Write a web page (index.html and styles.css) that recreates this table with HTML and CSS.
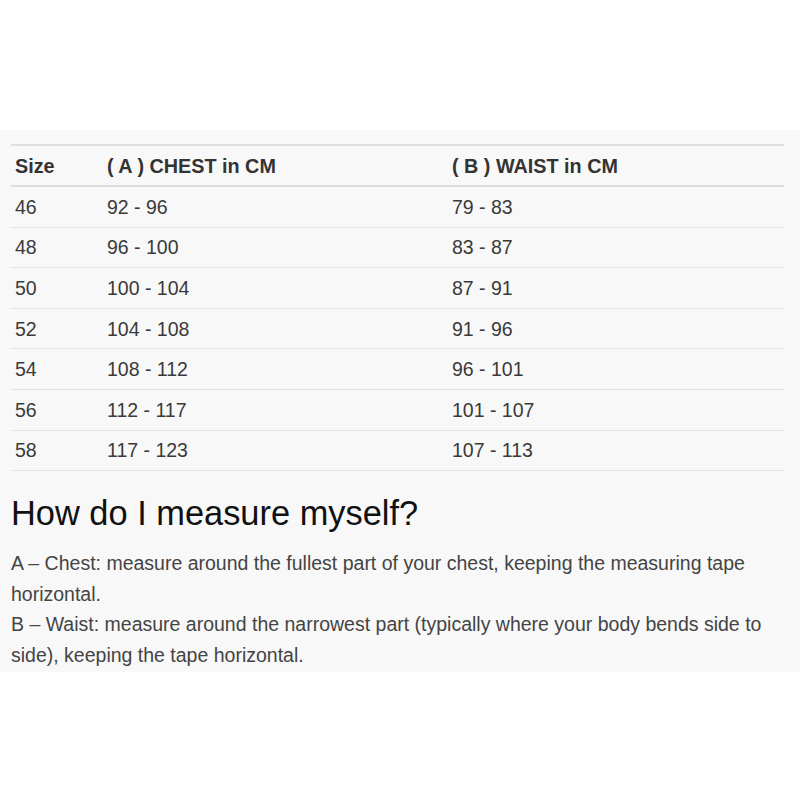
FILE: index.html
```html
<!DOCTYPE html>
<html>
<head>
<meta charset="utf-8">
<link rel="stylesheet" href="styles.css">
</head>
<body>
<div class="top-space"></div>
<section class="panel">
  <table class="size-table">
    <thead>
      <tr><th class="c-size">Size</th><th class="c-chest">( A ) CHEST in CM</th><th>( B ) WAIST in CM</th></tr>
    </thead>
    <tbody>
      <tr><td>46</td><td>92 - 96</td><td>79 - 83</td></tr>
      <tr><td>48</td><td>96 - 100</td><td>83 - 87</td></tr>
      <tr><td>50</td><td>100 - 104</td><td>87 - 91</td></tr>
      <tr><td>52</td><td>104 - 108</td><td>91 - 96</td></tr>
      <tr><td>54</td><td>108 - 112</td><td>96 - 101</td></tr>
      <tr><td>56</td><td>112 - 117</td><td>101 - 107</td></tr>
      <tr><td>58</td><td>117 - 123</td><td>107 - 113</td></tr>
    </tbody>
  </table>
  <h2 class="heading">How do I measure myself?</h2>
  <p class="desc">A – Chest: measure around the fullest part of your chest, keeping the measuring tape horizontal.<br>B – Waist: measure around the narrowest part (typically where your body bends side to side), keeping the tape horizontal.</p>
</section>
</body>
</html>
```

FILE: styles.css
```css
html, body {
  margin: 0;
  padding: 0;
  background: #ffffff;
}
body {
  font-family: "Liberation Sans", Arial, sans-serif;
  color: #333;
}
.top-space {
  height: 130px;
}
.panel {
  background: #f8f8f8;
  padding: 14px 16px 12px 11px;
  height: 542px;
  box-sizing: border-box;
}
.size-table {
  width: 100%;
  border-collapse: collapse;
  font-size: 19.5px;
}
.size-table th {
  text-align: left;
  font-weight: bold;
  font-size: 19.8px;
  color: #333;
  height: 39px;
  padding: 0 4px;
  border-top: 2px solid #e0e0e0;
  border-bottom: 2px solid #dcdcdc;
  line-height: 20px;
}
.size-table td {
  height: 39.6px;
  padding: 0 4px;
  border-bottom: 1px solid #e2e2e2;
  line-height: 20px;
  color: #3a3a3a;
}
.c-size { width: 84px; }
.c-chest { width: 337px; }
.heading {
  margin: 22px 0 0 0;
  font-size: 34.4px;
  font-weight: normal;
  color: #111;
  line-height: 40px;
}
.desc {
  margin: 15px 0 0 0;
  font-size: 19.5px;
  line-height: 30.6px;
  color: #444;
}
```
